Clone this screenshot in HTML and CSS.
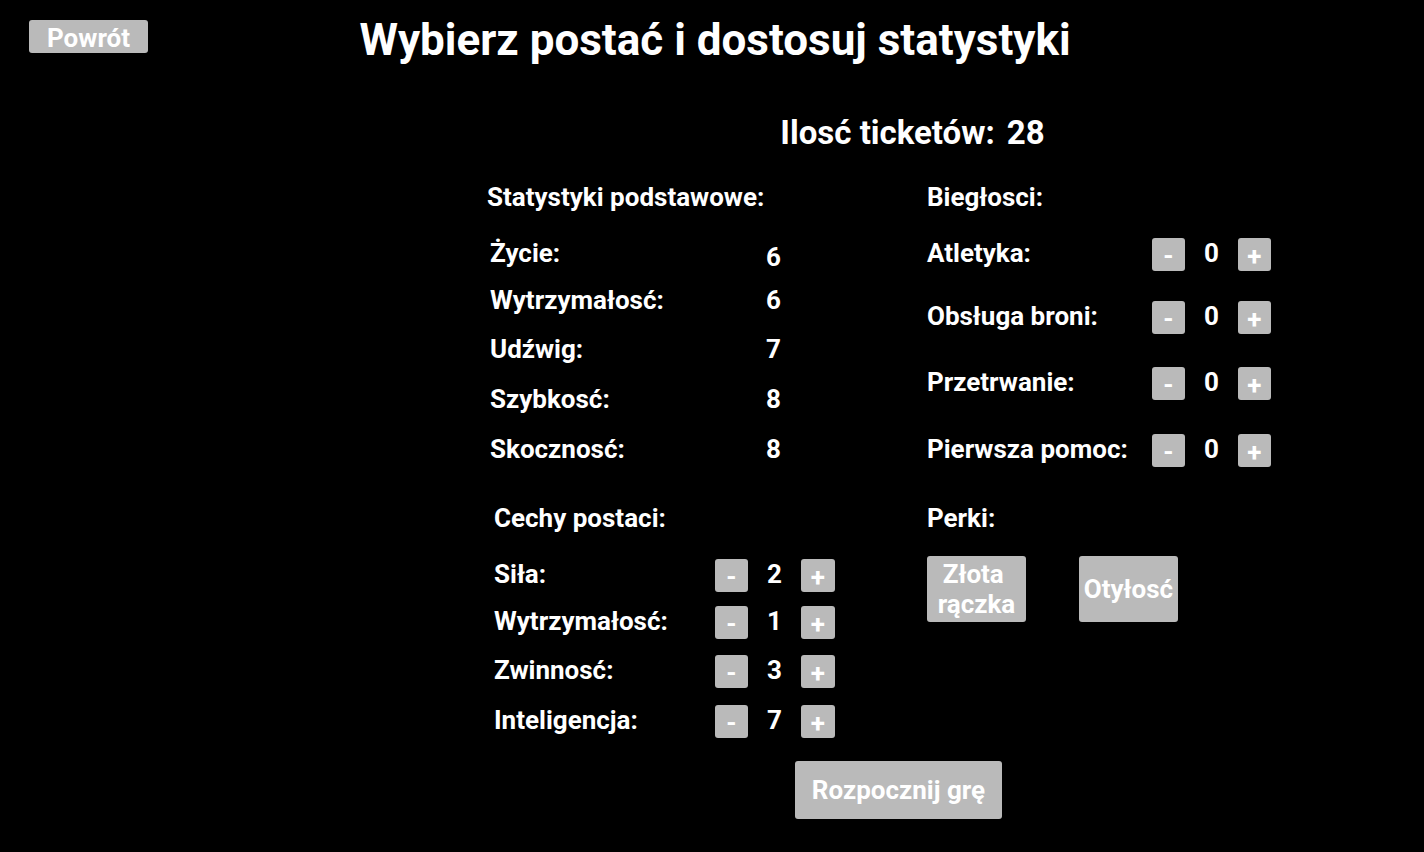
FILE: index.html
```html
<!DOCTYPE html>
<html lang="pl">
<head>
<meta charset="utf-8">
<meta name="viewport" content="width=device-width, initial-scale=1">
<title>Wybierz postać</title>
<link rel="stylesheet" href="styles.css">
</head>
<body>
<header class="topbar">
  <button type="button" class="btn back">Powrót</button>
  <h1 class="title">Wybierz postać i dostosuj statystyki</h1>
</header>
<main class="sheet">
  <p class="tickets"><span>Ilosć ticketów:</span><output>28</output></p>

  <section class="basic">
    <h2 class="heading">Statystyki podstawowe:</h2>
    <dl class="rows rows-tight rows-basic">
      <div class="row"><dt>Życie:</dt><dd class="value value-low">6</dd></div>
      <div class="row"><dt>Wytrzymałosć:</dt><dd class="value">6</dd></div>
      <div class="row"><dt>Udźwig:</dt><dd class="value">7</dd></div>
      <div class="row"><dt>Szybkosć:</dt><dd class="value">8</dd></div>
      <div class="row"><dt>Skocznosć:</dt><dd class="value">8</dd></div>
    </dl>
  </section>

  <section class="skills">
    <h2 class="heading">Biegłosci:</h2>
    <div class="rows rows-wide">
      <div class="row"><span>Atletyka:</span><div class="stepper"><button type="button" class="btn step" aria-label="Atletyka: mniej">-</button><output>0</output><button type="button" class="btn step" aria-label="Atletyka: więcej">+</button></div></div>
      <div class="row"><span>Obsługa broni:</span><div class="stepper"><button type="button" class="btn step" aria-label="Obsługa broni: mniej">-</button><output>0</output><button type="button" class="btn step" aria-label="Obsługa broni: więcej">+</button></div></div>
      <div class="row"><span>Przetrwanie:</span><div class="stepper"><button type="button" class="btn step" aria-label="Przetrwanie: mniej">-</button><output>0</output><button type="button" class="btn step" aria-label="Przetrwanie: więcej">+</button></div></div>
      <div class="row"><span>Pierwsza pomoc:</span><div class="stepper"><button type="button" class="btn step" aria-label="Pierwsza pomoc: mniej">-</button><output>0</output><button type="button" class="btn step" aria-label="Pierwsza pomoc: więcej">+</button></div></div>
    </div>
  </section>

  <section class="traits">
    <h2 class="heading">Cechy postaci:</h2>
    <div class="rows rows-tight">
      <div class="row"><span>Siła:</span><div class="stepper"><button type="button" class="btn step" aria-label="Siła: mniej">-</button><output>2</output><button type="button" class="btn step" aria-label="Siła: więcej">+</button></div></div>
      <div class="row"><span>Wytrzymałosć:</span><div class="stepper"><button type="button" class="btn step" aria-label="Wytrzymałosć: mniej">-</button><output>1</output><button type="button" class="btn step" aria-label="Wytrzymałosć: więcej">+</button></div></div>
      <div class="row"><span>Zwinnosć:</span><div class="stepper"><button type="button" class="btn step" aria-label="Zwinnosć: mniej">-</button><output>3</output><button type="button" class="btn step" aria-label="Zwinnosć: więcej">+</button></div></div>
      <div class="row"><span>Inteligencja:</span><div class="stepper"><button type="button" class="btn step" aria-label="Inteligencja: mniej">-</button><output>7</output><button type="button" class="btn step" aria-label="Inteligencja: więcej">+</button></div></div>
    </div>
  </section>

  <section class="perks">
    <h2 class="heading">Perki:</h2>
    <div class="perk-list">
      <button type="button" class="btn perk">Złota&nbsp;<br>rączka</button>
      <button type="button" class="btn perk">Otyłosć</button>
    </div>
  </section>

  <div class="actions"><button type="button" class="btn start">Rozpocznij grę</button></div>
</main>
</body>
</html>
```
FILE: styles.css
```css
* { box-sizing: border-box; }

body {
  margin: 0;
  background: #000;
  color: #fff;
  font: 700 26px/30px Roboto, sans-serif;
}

h1, h2, p, dl, dd { margin: 0; }

.btn {
  padding: 0;
  border: 0;
  border-radius: 3px;
  background: #bababa;
  color: #fff;
  font: inherit;
  cursor: pointer;
}

.topbar {
  display: grid;
  grid-template-columns: 1fr auto 1fr;
  align-items: start;
  padding: 14px 23px 0 29px;
}

.back {
  width: 119px;
  height: 33px;
  margin-top: 6px;
  padding-top: 3px;
}

.title {
  font-size: 44px;
  line-height: 52px;
}

.sheet {
  display: grid;
  grid-template-columns: 348fr 344fr;
  column-gap: 92px;
  padding: 47px 10.75% 0 34.2%;
}

.tickets {
  grid-column: 1 / -1;
  display: flex;
  justify-content: center;
  gap: 12px;
  padding-left: 67px;
  font-size: 33px;
  line-height: 40px;
}

.heading {
  font: inherit;
}

.basic, .skills { margin-top: 29px; }
.traits, .perks { padding-top: 19px; }
.traits { padding-left: 7px; }

.rows {
  display: grid;
  margin-top: 26px;
}

.rows-tight { grid-template-rows: 47px 49px 50px 46px; }
.rows-basic { grid-template-rows: 47px 49px 50px 50px 50px; padding: 0 54px 0 3px; }
.rows-wide { grid-template-rows: 63px 66px 67px 50px; }

.row {
  display: flex;
  justify-content: space-between;
  align-items: start;
}

.value-low { padding-top: 4px; }

.stepper {
  display: grid;
  grid-template-columns: 33px 53px 33px;
  text-align: center;
}

.traits .stepper { grid-template-columns: 33px 53px 34px; }

.step {
  height: 33px;
  padding-top: 3px;
}

.perk-list {
  display: flex;
  gap: 53px;
  margin-top: 23px;
}

.perk {
  width: 99px;
  height: 66px;
}

.actions {
  grid-column: 1 / -1;
  padding: 10px 0 33px 39px;
  text-align: center;
}

.start {
  width: 207px;
  height: 58px;
}
```
